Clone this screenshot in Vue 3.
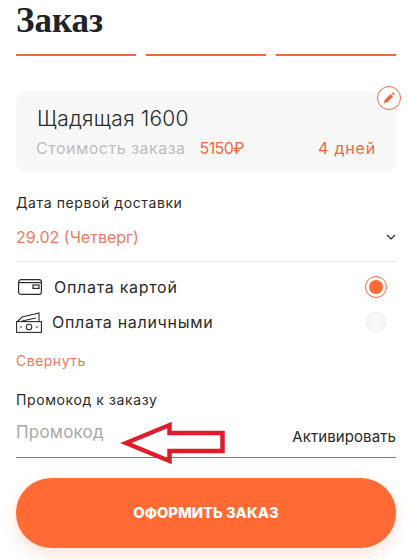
<script setup>
const steps = [1, 2, 3]
</script>

<template>
  <div class="page">
    <h1 class="title">Заказ</h1>
    <div class="steps">
      <span v-for="s in steps" :key="s" class="step"></span>
    </div>

    <section class="card">
      <div class="card-name">Щадящая 1600</div>
      <div class="card-row">
        <span class="cost-label">Стоимость заказа</span>
        <span class="cost">5150₽</span>
        <span class="days">4 дней</span>
      </div>
      <button class="edit" aria-label="Изменить">
        <svg width="12" height="12" viewBox="0 0 12 12">
          <path d="M1 11l.6-3L7.600 2l2.400 2.400-6 6zM8.400 1.300l.6-.5a.9.9 0 0 1 1.200 0l1 1a.9.9 0 0 1 0 1.200l-.5.6z" fill="#f0673f" />
        </svg>
      </button>
    </section>

    <div class="label date-label">Дата первой доставки</div>
    <div class="date-row">
      <span class="date">29.02 (Четверг)</span>
      <svg width="10" height="6" viewBox="0 0 10 6" fill="none">
        <path d="M1 1l4 4 4-4" stroke="#222" stroke-width="1.200" />
      </svg>
    </div>

    <div class="pay-row pay-card">
      <svg class="pay-icon" width="26" height="18" viewBox="0 0 26 18" fill="none" stroke="#2b2b2b" stroke-width="1.200">
        <rect x="2.600" y="1.600" width="22.800" height="14.800" rx="2.500" />
        <path d="M2.600 4.600h22.800" />
        <rect x="17" y="7" width="6" height="3.400" />
      </svg>
      <span class="pay-text">Оплата картой</span>
      <span class="radio on"><i></i></span>
    </div>
    <div class="pay-row pay-cash">
      <svg class="pay-icon" width="26" height="21" viewBox="0 0 26 21" fill="none" stroke="#2b2b2b" stroke-width="1.100">
        <rect x="0.600" y="9.600" width="24.800" height="10.800" />
        <path d="M1.500 9.500 6 5l17-4v8.500M6 9l14-3" />
        <circle cx="13" cy="15" r="2.800" />
        <path d="M4 15h2M20 15h2" />
      </svg>
      <span class="pay-text">Оплата наличными</span>
      <span class="radio"></span>
    </div>

    <a class="collapse">Свернуть</a>

    <div class="label promo-label">Промокод к заказу</div>
    <div class="promo-row">
      <span class="promo-input">Промокод</span>
      <span class="activate">Активировать</span>
    </div>
    <div class="promo-line"></div>

    <button class="submit">ОФОРМИТЬ ЗАКАЗ</button>

    <svg class="arrow" width="112" height="50" viewBox="0 0 112 50" fill="none">
      <path d="M9 24 52.500 6v8h53v18h-53v10z" stroke="#e01b2a" stroke-width="4.500" />
    </svg>
  </div>
</template>

<style scoped>
.page {
  position: relative;
  width: 410px;
  height: 560px;
  box-sizing: border-box;
  padding: 0 14px 0 16px;
  overflow: hidden;
  background: #fff;
  color: #2a2a2a;
  font-family: "Inter", "Noto Sans", sans-serif;
}
.title {
  margin: 0;
  height: 54px;
  box-sizing: border-box;
  padding-top: 1px;
  font-family: "Liberation Serif", serif;
  font-size: 35px;
  line-height: 40px;
  font-weight: 700;
  color: #20232a;
}
.steps {
  display: flex;
  gap: 10px;
}
.step {
  flex: 1;
  height: 2px;
  background: #f0673f;
}
.card {
  position: relative;
  height: 81px;
  margin-top: 35px;
  box-sizing: border-box;
  padding: 15px 20px 0 21px;
  border-radius: 10px;
  background: #f8f8f8;
}
.card-name {
  font-size: 21px;
  letter-spacing: 0.25px;
  line-height: 26px;
  font-weight: 300;
  color: #2a2a2a;
}
.card-row {
  display: flex;
  align-items: center;
  margin-top: 6px;
  font-size: 16px;
  letter-spacing: 0.5px;
  line-height: 20px;
}
.cost-label {
  margin-left: -1px;
  color: #bdbdbd;
}
.cost {
  margin-left: 14px;
  letter-spacing: -0.6px;
  color: #f0673f;
}
.days {
  margin-left: auto;
  letter-spacing: 0.8px;
  color: #f0673f;
}
.edit {
  position: absolute;
  top: -5px;
  right: -5px;
  display: flex;
  align-items: center;
  justify-content: center;
  width: 24px;
  height: 24px;
  padding: 0;
  border: 1px solid #f0673f;
  border-radius: 50%;
  background: #fff;
}
.label {
  font-size: 14px;
  letter-spacing: 0.6px;
  line-height: 18px;
  color: #2a2a2a;
}
.date-label {
  margin-top: 22px;
}
.date-row {
  display: flex;
  align-items: center;
  justify-content: space-between;
  height: 46px;
  margin-top: 4px;
  padding-bottom: 4px;
  box-sizing: border-box;
  border-bottom: 1px solid #e8e8e8;
}
.date {
  font-size: 16px;
  color: #ee7a63;
}
.pay-row {
  display: flex;
  align-items: center;
  height: 36px;
}
.pay-text {
  font-size: 16px;
  letter-spacing: 0.7px;
  color: #2a2a2a;
}
.pay-card {
  margin-top: 7px;
}
.pay-cash {
  margin-top: -1px;
}
.pay-card .pay-icon {
  margin-right: 12px;
}
.pay-cash .pay-icon {
  margin-right: 10px;
}
.radio {
  display: flex;
  align-items: center;
  justify-content: center;
  width: 20px;
  height: 20px;
  margin-left: auto;
  margin-right: 10px;
  box-sizing: border-box;
  border: 1px solid #eee;
  border-radius: 50%;
  background: #f8f8f8;
}
.radio.on {
  width: 22px;
  height: 22px;
  margin-right: 9px;
  border-color: #f0673f;
  background: #fff;
}
.radio i {
  width: 14px;
  height: 14px;
  border-radius: 50%;
  background: #ff6a35;
}
.collapse {
  display: block;
  margin-top: 12px;
  font-size: 14px;
  letter-spacing: 0.5px;
  line-height: 18px;
  color: #ee7a63;
}
.promo-label {
  margin-top: 21px;
}
.promo-row {
  display: flex;
  align-items: center;
  justify-content: space-between;
  height: 41px;
  margin-top: 7px;
  box-sizing: border-box;
}
.promo-line {
  height: 1px;
  background: #e8503a;
}
.promo-input {
  font-size: 17px;
  letter-spacing: 0.2px;
  color: #a9a9a9;
  margin-top: -10px;
}
.activate {
  font-size: 15px;
  letter-spacing: 0.1px;
  color: #2a2a2a;
  margin-top: -1px;
}
.submit {
  display: block;
  width: 100%;
  height: 70px;
  margin-top: 20px;
  border: none;
  border-radius: 35px;
  background: #ff6a35;
  box-shadow: 0 6px 16px rgba(255, 106, 53, 0.2);
  color: #fff;
  font-family: inherit;
  font-size: 14.700px;
  font-weight: 800;
}
.arrow {
  position: absolute;
  left: 117px;
  top: 419px;
}
</style>
